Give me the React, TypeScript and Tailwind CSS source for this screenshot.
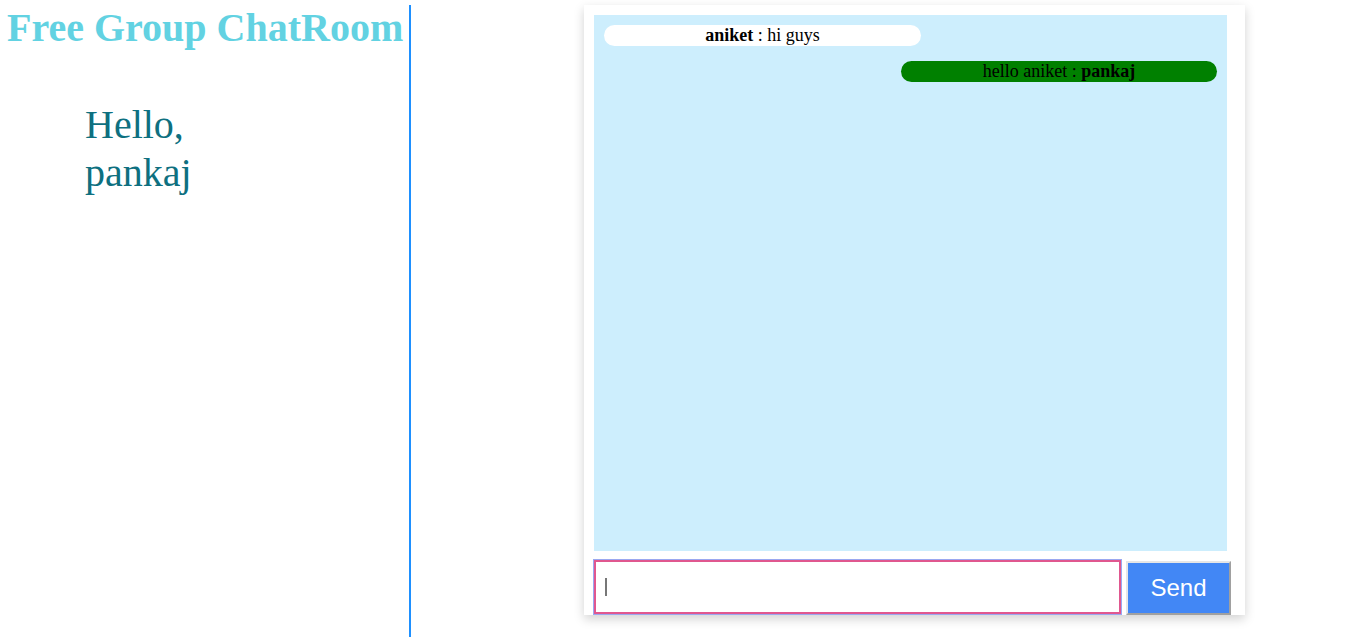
export default function App() {
  return (
    <div className="flex h-[637px] w-[1346px] bg-white pt-[5px]" style={{ fontFamily: '"Liberation Serif", "Times New Roman", serif' }}>
      <div className="w-[411px] shrink-0 border-r-2 border-[#1e90ff]">
        <h1 className="pl-[7px] text-[40px] font-bold leading-[46px] text-[#62d2e2]">Free Group ChatRoom</h1>
        <div className="mt-[50px] pl-[85px] text-[40px] leading-[48px] text-[#0e7080]">
          <div>Hello,</div>
          <div>pankaj</div>
        </div>
      </div>
      <div className="pl-[173px]">
        <div className="flex h-[610px] w-[661px] flex-col bg-white pl-[10px] pt-[10px] shadow-[0_4px_10px_rgba(0,0,0,0.18)]">
          <div className="flex h-[536px] w-[633px] flex-col gap-[15px] bg-[#cdeefd] p-[10px] text-[18px] leading-[21px] text-black">
            <div className="w-[317px] rounded-full bg-white text-center">
              <b>aniket</b> : hi guys
            </div>
            <div className="ml-auto w-[316px] rounded-full bg-[#008000] text-center">
              hello aniket : <b>pankaj</b>
            </div>
          </div>
          <div className="mt-[9px] flex items-start">
            <div className="flex h-[54px] w-[527px] items-center border-2 border-[#e0578f] bg-white pl-[9px] outline outline-1 outline-[#9aa8f0]">
              <span className="h-[18px] w-[2px] bg-[#777]"></span>
            </div>
            <div
              className="ml-[5px] mt-[1px] flex h-[54px] w-[105px] items-center justify-center border-2 border-t-[#e6e6e6] border-l-[#e6e6e6] border-r-[#a0a0a0] border-b-[#a0a0a0] bg-[#4287f5] text-[24px] text-white"
              style={{ fontFamily: '"Liberation Sans", Arial, sans-serif' }}
            >
              Send
            </div>
          </div>
        </div>
      </div>
    </div>
  );
}
